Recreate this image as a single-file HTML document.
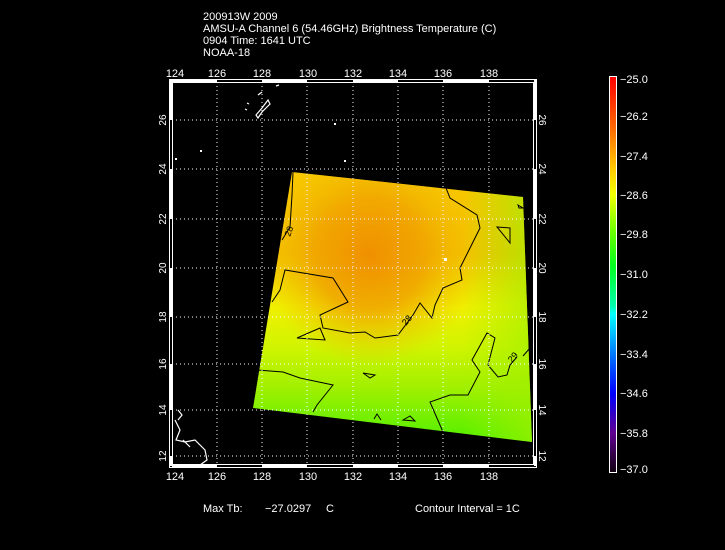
<!DOCTYPE html>
<html><head><meta charset="utf-8"><style>
html,body{margin:0;padding:0;background:#000;}
body{width:725px;height:550px;overflow:hidden;position:relative;font-family:"Liberation Sans",sans-serif;color:#fff;}
.t{position:absolute;font-size:11px;line-height:12px;white-space:pre;}
</style></head><body>
<div class="t" style="left:203px;top:11px">200913W 2009
AMSU-A Channel 6 (54.46GHz) Brightness Temperature (C)
0904 Time: 1641 UTC
NOAA-18</div>
<svg width="725" height="550" style="position:absolute;left:0;top:0" font-family="Liberation Sans, sans-serif" font-size="11" fill="#fff">
<defs>
<linearGradient id="bg" x1="0" y1="172" x2="0" y2="442" gradientUnits="userSpaceOnUse">
<stop offset="0" stop-color="#f8c800"/><stop offset="0.3" stop-color="#f4c000"/><stop offset="0.5" stop-color="#f0f000"/><stop offset="0.65" stop-color="#d0f400"/><stop offset="0.8" stop-color="#a0f000"/><stop offset="1" stop-color="#50f000"/>
</linearGradient>
<linearGradient id="side" x1="253" y1="0" x2="532" y2="0" gradientUnits="userSpaceOnUse">
<stop offset="0" stop-color="#80f000" stop-opacity="0"/><stop offset="0.75" stop-color="#a0f000" stop-opacity="0"/><stop offset="1" stop-color="#a0f000" stop-opacity="0.7"/>
</linearGradient>
<radialGradient id="hot" cx="370" cy="255" r="110" gradientUnits="userSpaceOnUse">
<stop offset="0" stop-color="#f09000"/><stop offset="0.5" stop-color="#f0a000" stop-opacity="0.8"/><stop offset="1" stop-color="#f0c000" stop-opacity="0"/>
</radialGradient>
<linearGradient id="cb" x1="0" y1="0" x2="0" y2="1">
<stop offset="0" stop-color="#ff0000"/><stop offset="0.12" stop-color="#ff6000"/><stop offset="0.24" stop-color="#ffd000"/><stop offset="0.3" stop-color="#f0ff00"/><stop offset="0.4" stop-color="#60ff00"/><stop offset="0.48" stop-color="#00ff20"/><stop offset="0.58" stop-color="#00ffb0"/><stop offset="0.6" stop-color="#00ffff"/><stop offset="0.72" stop-color="#0060ff"/><stop offset="0.8" stop-color="#0000ff"/><stop offset="0.9" stop-color="#600090"/><stop offset="1" stop-color="#100010"/>
</linearGradient>
</defs>
<polygon points="292,172 523,197 532,442 253,408" fill="url(#bg)"/>
<polygon points="292,172 523,197 532,442 253,408" fill="url(#side)"/>
<polygon points="292,172 523,197 532,442 253,408" fill="url(#hot)"/>
<g fill="none" stroke="#000" stroke-width="1">
<path d="M446,188 L450,198 L477,215 L480,228 L470,248 L460,268 L462,280 L443,288 L435,305 L432,318 L420,303 L413,315 L398,335 L375,338 L365,332 L350,333 L323,328 L320,315 L348,302 L333,278 L285,270 L280,290 L272,302"/>
<path d="M320,328 L297,338 L325,340 Z"/>
<path d="M293,172 L292,195 L290,227 L282,240"/>
<path d="M497,227 L510,228 L510,243 Z"/>
<path d="M518,205 L523,208 L519,208 Z"/>
<path d="M257,370 L283,372 L300,378 L333,385 L317,405 L313,412"/>
<path d="M363,373 L375,375 L370,378 Z"/>
<path d="M443,432 L430,402 L450,395 L468,395 L480,372 L472,360 L487,333 L495,338 L488,365 L498,377 L507,375 L510,365 L517,357 M523,356 L530,348"/>
<path d="M374,419 L377,414 L381,420 M403,420 L410,416 L415,421 Z"/>
</g>
<g stroke="#fff" stroke-width="1" stroke-dasharray="1,3">
<path d="M217,82V465M262,82V465M307,82V465M353,82V465M398,82V465M443,82V465M489,82V465"/>
<path d="M172,120H535M172,169H535M172,219H535M172,268H535M172,317H535M172,364H535M172,410H535M172,456H535"/>
</g>
<g fill="none" stroke="#fff" stroke-width="1.2">
<path d="M256,115 L262,108 L268,100 L270,104 L262,112 L258,118 Z"/>
<path d="M258,95 L262,92 M276,86 L279,85 M245,109 L247,110 M247,103 L249,104 M178,410 L182,415 L178,420 M175,420 L180,430 L176,440 L185,442 L195,440 L205,450 L207,460 L200,465 M183,440 L190,447"/>
</g>
<rect x="200" y="150" width="2" height="2"/><rect x="175" y="158" width="2" height="2"/><rect x="334" y="123" width="2" height="2"/><rect x="344" y="160" width="2" height="2"/><rect x="444" y="258" width="3" height="3"/>
<rect x="169.5" y="79.5" width="367" height="388" fill="none" stroke="#fff" stroke-width="1"/>
<rect x="172.5" y="82.5" width="361" height="382" fill="none" stroke="#fff" stroke-width="1"/>
<g fill="#fff">
<rect x="170" y="80" width="2" height="40"/><rect x="170" y="169" width="2" height="50"/><rect x="170" y="268" width="2" height="49"/><rect x="170" y="364" width="2" height="46"/><rect x="170" y="456" width="2" height="10"/>
<rect x="534" y="80" width="2" height="40"/><rect x="534" y="169" width="2" height="50"/><rect x="534" y="268" width="2" height="49"/><rect x="534" y="364" width="2" height="46"/><rect x="534" y="456" width="2" height="10"/>
<rect x="172" y="465" width="45" height="2"/><rect x="262" y="465" width="45" height="2"/><rect x="353" y="465" width="45" height="2"/><rect x="443" y="465" width="46" height="2"/>
<rect x="172" y="80" width="45" height="2"/><rect x="262" y="80" width="45" height="2"/><rect x="353" y="80" width="45" height="2"/><rect x="443" y="80" width="46" height="2"/>
</g>
<g text-anchor="middle">
<text x="175" y="77">124</text><text x="217" y="77">126</text><text x="262" y="77">128</text><text x="308" y="77">130</text><text x="353" y="77">132</text><text x="398" y="77">134</text><text x="443" y="77">136</text><text x="489" y="77">138</text>
<text x="175" y="480">124</text><text x="217" y="480">126</text><text x="262" y="480">128</text><text x="308" y="480">130</text><text x="353" y="480">132</text><text x="398" y="480">134</text><text x="443" y="480">136</text><text x="489" y="480">138</text>
</g>
<g font-size="10">
<text transform="translate(166,120) rotate(-90)" text-anchor="middle">26</text>
<text transform="translate(166,169) rotate(-90)" text-anchor="middle">24</text>
<text transform="translate(166,219) rotate(-90)" text-anchor="middle">22</text>
<text transform="translate(166,268) rotate(-90)" text-anchor="middle">20</text>
<text transform="translate(166,317) rotate(-90)" text-anchor="middle">18</text>
<text transform="translate(166,364) rotate(-90)" text-anchor="middle">16</text>
<text transform="translate(166,410) rotate(-90)" text-anchor="middle">14</text>
<text transform="translate(166,456) rotate(-90)" text-anchor="middle">12</text>
<text transform="translate(539,120) rotate(90)" text-anchor="middle">26</text>
<text transform="translate(539,169) rotate(90)" text-anchor="middle">24</text>
<text transform="translate(539,219) rotate(90)" text-anchor="middle">22</text>
<text transform="translate(539,268) rotate(90)" text-anchor="middle">20</text>
<text transform="translate(539,317) rotate(90)" text-anchor="middle">18</text>
<text transform="translate(539,364) rotate(90)" text-anchor="middle">16</text>
<text transform="translate(539,410) rotate(90)" text-anchor="middle">14</text>
<text transform="translate(539,456) rotate(90)" text-anchor="middle">12</text>
</g>
<g font-size="9" fill="#000">
<text transform="translate(290,237) rotate(-70)">28</text>
<text transform="translate(406,326) rotate(-50)">28</text>
<text transform="translate(512,363) rotate(-50)">29</text>
</g>
<rect x="609.5" y="76.5" width="7" height="396" fill="url(#cb)" stroke="#fff" stroke-width="1"/>
<g font-size="11">
<text x="620" y="83">−25.0</text><text x="620" y="120">−26.2</text><text x="620" y="160">−27.4</text><text x="620" y="199">−28.6</text><text x="620" y="238">−29.8</text><text x="620" y="278">−31.0</text><text x="620" y="318">−32.2</text><text x="620" y="358">−33.4</text><text x="620" y="397">−34.6</text><text x="620" y="437">−35.8</text><text x="620" y="473">−37.0</text>
</g>
<text x="203" y="512">Max Tb:</text>
<text x="265" y="512">−27.0297</text>
<text x="326" y="512">C</text>
<text x="415" y="512">Contour Interval = 1C</text>
</svg>
</body></html>
